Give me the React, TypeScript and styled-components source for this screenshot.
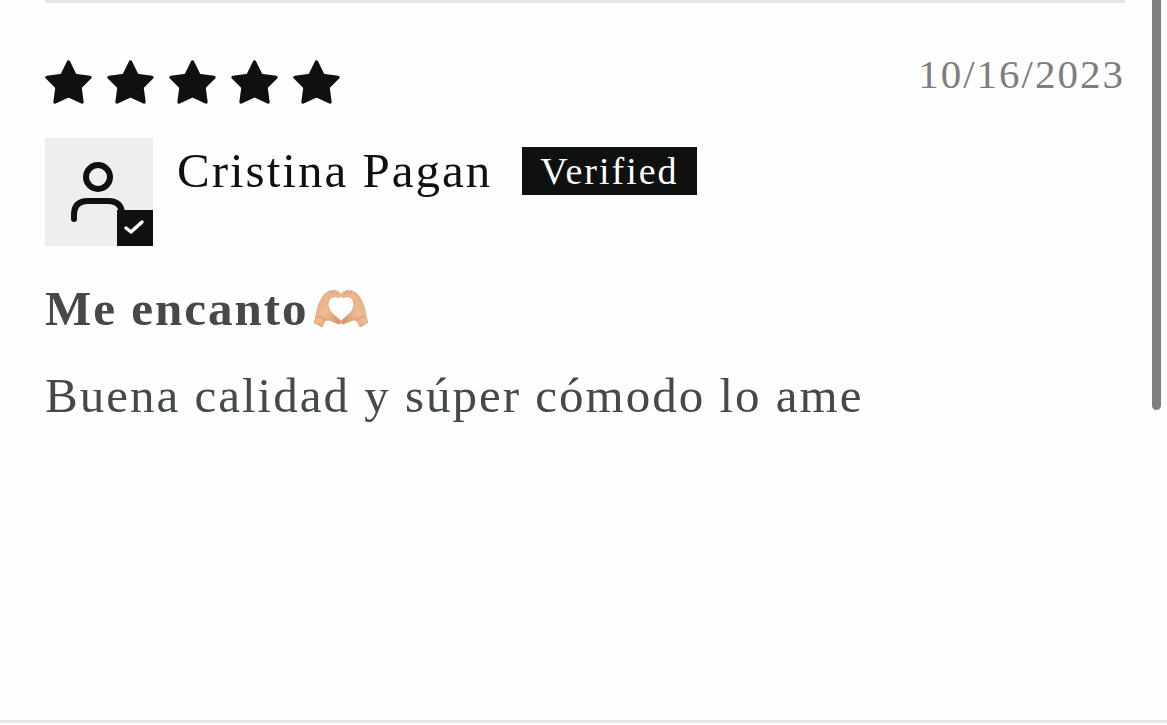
import React from "react";
import styled, { createGlobalStyle } from "styled-components";

const GlobalStyle = createGlobalStyle`
  * { box-sizing: border-box; }
  body {
    margin: 0;
    background: #fefefe;
    color: #0e1110;
    font-family: "Liberation Serif", "Times New Roman", serif;
    font-size: 49px;
    letter-spacing: 2px;
    overflow: hidden;
  }
`;

const Page = styled.main`
  display: flex;
  flex-direction: column;
  min-height: 100vh;
  padding-bottom: 2px;
`;

const Reviews = styled.section`
  flex: 1;
  padding: 0 42px 0 45px;
  border-bottom: 3px solid #e9e9e9;
`;

const Review = styled.article`
  border-top: 3px solid #e6e6e6;
  padding-top: 48px;
`;

const TopRow = styled.div`
  display: flex;
  justify-content: space-between;
  align-items: flex-start;
`;

const Stars = styled.div`
  display: flex;
  gap: 15px;
  padding-top: 9px;
`;

const StarIcon = styled.svg`
  display: block;
  width: 47px;
  height: 44px;
`;

const PostedOn = styled.time`
  color: #7d7f7e;
  font-size: 41px;
  line-height: 46px;
`;

const Author = styled.div`
  display: flex;
  align-items: flex-start;
  gap: 24px;
  margin-top: 34px;
`;

const Avatar = styled.div`
  position: relative;
  width: 108px;
  height: 108px;
  background: #eeeeee;
`;

const PersonIcon = styled.svg`
  display: block;
  width: 108px;
  height: 108px;
`;

const CheckBadge = styled.span`
  position: absolute;
  right: 0;
  bottom: 0;
  width: 36px;
  height: 36px;
  background: #0e1110;
`;

const CheckIcon = styled.svg`
  display: block;
  width: 36px;
  height: 36px;
`;

const Identity = styled.div`
  display: flex;
  align-items: center;
  gap: 30px;
  line-height: 66px;
`;

const Verified = styled.span`
  padding: 0 18px;
  background: #0e1110;
  color: #fff;
  font-size: 38px;
  line-height: 48px;
`;

const Title = styled.h3`
  display: flex;
  align-items: center;
  gap: 4px;
  margin: 31px 0 0;
  color: #454a48;
  font-size: 49px;
  font-weight: 700;
  line-height: 64px;
`;

const HandsIcon = styled.svg`
  width: 56px;
  height: 38px;
`;

const Comment = styled.p`
  margin: 23px 0 0;
  color: #454a48;
  line-height: 64px;
`;

const ScrollThumb = styled.div`
  position: absolute;
  top: 0;
  right: 6px;
  width: 9px;
  height: 410px;
  border-radius: 0 0 5px 5px;
  background: #808080;
`;

const Star = () => (
  <StarIcon viewBox="0 0 141 132" aria-hidden="true">
    <path
      d="M70.5 6 90 46 135 52 105 82 111 126 70.500 107 30 126 36 82 6 52 51 46Z"
      fill="#0e1110"
      stroke="#0e1110"
      strokeWidth="10"
      strokeLinejoin="round"
    />
  </StarIcon>
);

const Hand = () => (
  <>
    <path
      d="M9 37 1 32.500C3 28 3 25 4 21C5 16 7 11 9 8C11 4 14 2 17 1C20 .3 21 .3 23 1C26 1.500 27.500 3 27.500 4.500C27.500 6.500 27 7.500 25.500 7.500C24 7.500 23 6 21 6.500C17 7.500 15 11 15 14.500C15.500 20 18 22 21 25L27 30C28.500 32 27.500 34.500 25.500 34C22 33 18 30 15 30C12 30 11 32 9 37Z"
      fill="url(#skin)"
      stroke="#d99a70"
      strokeWidth=".8"
      strokeLinejoin="round"
    />
    <path
      d="M4 27C7 26 9 28 12 30M18 2 21 5M22 2 25 5M22 27 24 31"
      fill="none"
      stroke="#cf8259"
      strokeWidth=".7"
      strokeLinecap="round"
    />
  </>
);

const HeartHands = () => (
  <HandsIcon viewBox="0 0 56 38" role="img" aria-label="Heart hands">
    <defs>
      <linearGradient id="skin" x1="0" y1="0" x2="1" y2="1">
        <stop offset="0" stopColor="#e4aa7e" />
        <stop offset="0.5" stopColor="#efbb92" />
        <stop offset="1" stopColor="#d98f63" />
      </linearGradient>
    </defs>
    <Hand />
    <g transform="matrix(-1 0 0 1 56 0)">
      <Hand />
    </g>
  </HandsIcon>
);

export default function App() {
  return (
    <>
      <GlobalStyle />
      <Page>
        <Reviews>
          <Review>
            <TopRow>
              <Stars role="img" aria-label="5 out of 5 stars">
                {[1, 2, 3, 4, 5].map((n) => (
                  <Star key={n} />
                ))}
              </Stars>
              <PostedOn dateTime="2023-10-16">10/16/2023</PostedOn>
            </TopRow>
            <Author>
              <Avatar>
                <PersonIcon viewBox="0 0 108 108" aria-hidden="true">
                  <g fill="none" stroke="#0e1110" strokeWidth="6" strokeLinecap="round">
                    <circle cx="53" cy="39" r="12" />
                    <path d="M29 81V77Q29 63 43 63H63Q77 63 77 77V81" />
                  </g>
                </PersonIcon>
                <CheckBadge>
                  <CheckIcon viewBox="0 0 36 36" aria-hidden="true">
                    <path
                      d="M9 18 14 22 25 12"
                      fill="none"
                      stroke="#fff"
                      strokeWidth="3.5"
                      strokeLinecap="round"
                      strokeLinejoin="round"
                    />
                  </CheckIcon>
                </CheckBadge>
              </Avatar>
              <Identity>
                <span>Cristina Pagan</span>
                <Verified>Verified</Verified>
              </Identity>
            </Author>
            <Title>
              <span>Me encanto</span>
              <HeartHands />
            </Title>
            <Comment>Buena calidad y súper cómodo lo ame</Comment>
          </Review>
        </Reviews>
      </Page>
      <ScrollThumb />
    </>
  );
}
